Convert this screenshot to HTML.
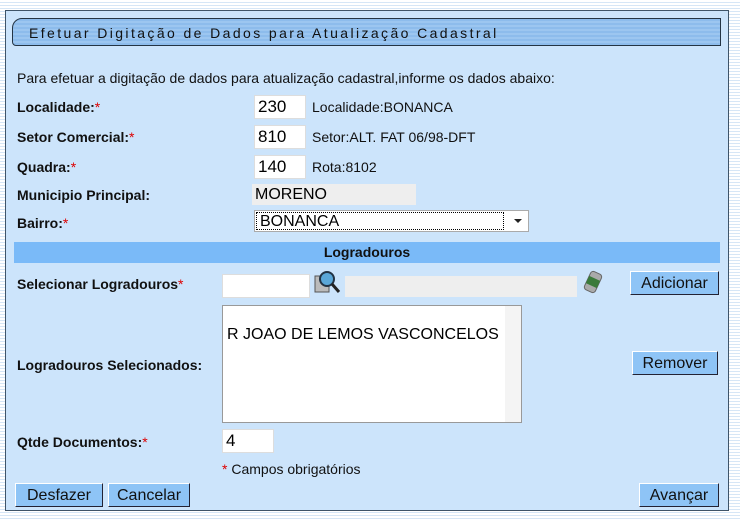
<!DOCTYPE html><html><head><style>
body{margin:0;width:740px;height:519px;overflow:hidden;background:repeating-linear-gradient(#fff 0 2px,#d6e6f6 2px 3px);font-family:"Liberation Sans",sans-serif;position:relative}
.a{position:absolute}
.p{left:5px;top:10px;width:722px;height:499px;background:#cce4fb;border:1px solid #3f5468}
.t{left:12px;top:18px;width:709px;height:28px;background:repeating-linear-gradient(#8dbcec 0 2px,#9cc6f0 2px 4px);border:1px solid #243444;border-radius:10px 0 0 4px;font-size:14px;letter-spacing:2.4px;line-height:28px;padding-left:16px;box-sizing:border-box;color:#111}
.l{font-size:14px;font-weight:bold;color:#111}
.r{color:#d00;font-weight:normal}
.n{font-size:14px;color:#111}
.i{background:#fff;border:1px solid #ddd;font-size:17px;line-height:22px;padding-left:3px;box-sizing:border-box}
.b{background:#8ec4f6;border:1px solid #fff;border-right-color:#223;border-bottom-color:#223;font-size:16px;line-height:23px;text-align:center;box-sizing:border-box;color:#111}
</style></head><body>
<div class="a p"></div>
<div class="a t">Efetuar Digitação de Dados para Atualização Cadastral</div>
<div class="a n" style="left:17px;top:70px">Para efetuar a digitação de dados para atualização cadastral,informe os dados abaixo:</div>
<div class="a l" style="left:17px;top:99px">Localidade:<span class="r">*</span></div>
<div class="a i" style="left:254px;top:95px;width:52px;height:24px">230</div>
<div class="a n" style="left:312px;top:99px">Localidade:BONANCA</div>
<div class="a l" style="left:17px;top:129px">Setor Comercial:<span class="r">*</span></div>
<div class="a i" style="left:254px;top:125px;width:52px;height:24px">810</div>
<div class="a n" style="left:312px;top:129px">Setor:ALT. FAT 06/98-DFT</div>
<div class="a l" style="left:17px;top:159px">Quadra:<span class="r">*</span></div>
<div class="a i" style="left:254px;top:155px;width:52px;height:24px">140</div>
<div class="a n" style="left:312px;top:159px">Rota:8102</div>
<div class="a l" style="left:17px;top:187px">Municipio Principal:</div>
<div class="a" style="left:252px;top:184px;width:161px;height:21px;background:#eee;font-size:16px;line-height:21px;padding-left:3px">MORENO</div>
<div class="a l" style="left:17px;top:215px">Bairro:<span class="r">*</span></div>
<div class="a" style="left:254px;top:210px;width:275px;height:22px;background:#fff;border:1px solid #aaa;box-sizing:border-box"><div class="a" style="left:1px;top:1px;width:248px;height:18px;border:1px dotted #000;font-size:16px;line-height:18px;padding-left:3px;box-sizing:border-box">BONANCA</div><div class="a" style="left:259px;top:8px;border:4px solid transparent;border-top:4px solid #222;border-bottom:0"></div></div>
<div class="a l" style="left:14px;top:242px;width:706px;height:21px;background:#7abaf8;text-align:center;line-height:21px">Logradouros</div>
<div class="a l" style="left:17px;top:276px">Selecionar Logradouros<span class="r">*</span></div>
<div class="a i" style="left:222px;top:274px;width:88px;height:24px"></div>
<svg class="a" style="left:312px;top:268px" width="30" height="30"><rect x="3" y="8" width="14" height="16" fill="#bbb" stroke="#555"/><circle cx="15" cy="11" r="7" fill="#5aa7d8" stroke="#234" stroke-width="2"/><line x1="20" y1="16" x2="27" y2="24" stroke="#222" stroke-width="3"/></svg>
<div class="a" style="left:345px;top:276px;width:232px;height:21px;background:#eee"></div>
<svg class="a" style="left:582px;top:268px" width="22" height="28"><g transform="rotate(25 11 14)"><rect x="5" y="4" width="12" height="20" rx="3" fill="#aaa" stroke="#666"/><rect x="5" y="10" width="12" height="8" fill="#3a7a3a"/></g></svg>
<div class="a b" style="left:630px;top:271px;width:89px;height:24px">Adicionar</div>
<div class="a l" style="left:17px;top:357px">Logradouros Selecionados:</div>
<div class="a" style="left:222px;top:305px;width:300px;height:118px;background:#fff;border:1px solid #999;box-sizing:border-box;font-size:16px"><div class="a" style="left:4px;top:20px">R JOAO DE LEMOS VASCONCELOS</div><div class="a" style="right:0;top:0;width:16px;height:116px;background:#f4f4f4"></div></div>
<div class="a b" style="left:632px;top:351px;width:86px;height:24px">Remover</div>
<div class="a l" style="left:17px;top:434px">Qtde Documentos:<span class="r">*</span></div>
<div class="a i" style="left:222px;top:429px;width:52px;height:24px">4</div>
<div class="a n" style="left:222px;top:461px"><span style="color:#d00">*</span> Campos obrigatórios</div>
<div class="a b" style="left:15px;top:483px;width:88px;height:24px">Desfazer</div>
<div class="a b" style="left:108px;top:483px;width:82px;height:24px">Cancelar</div>
<div class="a b" style="left:639px;top:483px;width:80px;height:24px">Avançar</div>
</body></html>
